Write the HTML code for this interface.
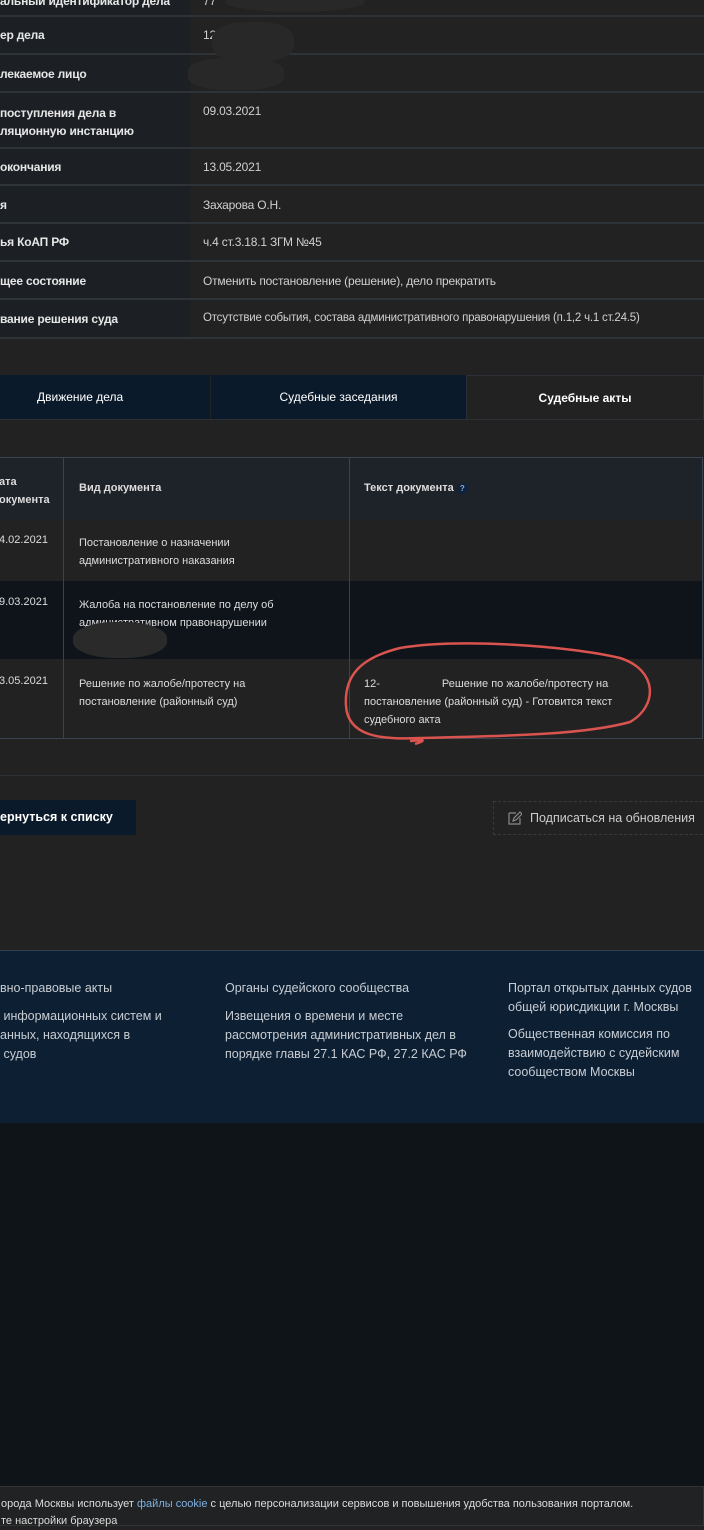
<!DOCTYPE html>
<html><head><meta charset="utf-8"><style>
*{margin:0;padding:0;box-sizing:border-box}
body{width:704px;height:1516px;background:#222;font-family:"Liberation Sans","DejaVu Sans",sans-serif;color:#d8d8d8;position:relative;overflow:hidden}
.row{position:absolute;left:0;width:704px;border-bottom:2px solid #2e3338;font-size:12px}
.row .l{position:absolute;left:0;top:0;bottom:0;width:190px;background:#1c2025;color:#e6e6e6;font-weight:bold;padding-left:0;letter-spacing:-0.2px}
.row .v{position:absolute;left:203px;top:0;color:#d0d0d0;letter-spacing:-0.2px}
.abs{position:absolute}
.blot{position:absolute;background:#282828;border-radius:50%}
</style></head><body>
<div class="row" style="top:-22px;height:39px"><div class="l"><span class="abs" style="top:16px">альный идентификатор дела</span></div><div class="v" style="top:16px">77</div></div>
<div class="row" style="top:17px;height:38px"><div class="l"><span class="abs" style="top:11px">ер дела</span></div><div class="v" style="top:11px">12</div></div>
<div class="row" style="top:55px;height:38px"><div class="l"><span class="abs" style="top:12px">лекаемое лицо</span></div></div>
<div class="row" style="top:93px;height:56px"><div class="l"><span class="abs" style="top:11px;line-height:18px">поступления дела в<br>ляционную инстанцию</span></div><div class="v" style="top:11px">09.03.2021</div></div>
<div class="row" style="top:149px;height:37px"><div class="l"><span class="abs" style="top:11px">окончания</span></div><div class="v" style="top:11px">13.05.2021</div></div>
<div class="row" style="top:186px;height:38px"><div class="l"><span class="abs" style="top:12px">я</span></div><div class="v" style="top:12px">Захарова О.Н.</div></div>
<div class="row" style="top:224px;height:38px"><div class="l"><span class="abs" style="top:11px">ья КоАП РФ</span></div><div class="v" style="top:11px">ч.4 ст.3.18.1 ЗГМ №45</div></div>
<div class="row" style="top:262px;height:38px"><div class="l"><span class="abs" style="top:12px">щее состояние</span></div><div class="v" style="top:12px">Отменить постановление (решение), дело прекратить</div></div>
<div class="row" style="top:300px;height:39px"><div class="l"><span class="abs" style="top:12px">вание решения суда</span></div><div class="v" style="top:12px;font-size:11.5px">Отсутствие события, состава административного правонарушения (п.1,2 ч.1 ст.24.5)</div></div>
<div class="blot" style="left:225px;top:-8px;width:140px;height:20px"></div>
<div class="blot" style="left:212px;top:22px;width:82px;height:40px;border-radius:40%"></div>
<div class="blot" style="left:188px;top:58px;width:96px;height:32px;border-radius:40%"></div>

<div class="abs" style="top:375px;left:0;width:704px;height:45px;border-bottom:1px solid #2c3036"></div>
<div class="abs" style="top:375px;left:0;width:210px;height:44px;background:#0b1a2b;font-size:12px;color:#fff;line-height:44px;padding-left:37px">Движение дела</div>
<div class="abs" style="top:375px;left:211px;width:255px;height:44px;background:#0b1a2b;font-size:12px;color:#fff;text-align:center;line-height:44px">Судебные заседания</div>
<div class="abs" style="top:375px;left:466px;width:238px;height:45px;border:1px solid #2c3036;border-bottom:none;font-size:12px;color:#fff;font-weight:bold;text-align:center;line-height:45px">Судебные акты</div>

<div class="abs" style="top:457px;left:-2px;width:705px;height:282px;border:1px solid #3a4450;font-size:11px;color:#ddd">
<div class="abs" style="top:0;left:0;right:0;height:62px;background:#1e2329"></div>
<div class="abs" style="top:123px;left:0;right:0;height:78px;background:#0f141a"></div>
<div class="abs" style="top:0;bottom:0;left:64px;border-left:1px solid #3a4450"></div>
<div class="abs" style="top:0;bottom:0;left:350px;border-left:1px solid #3a4450"></div>
<div class="abs" style="top:15px;left:0;font-weight:bold;line-height:18px">ата<br>окумента</div>
<div class="abs" style="top:24px;left:80px;font-weight:bold">Вид документа</div>
<div class="abs" style="top:24px;left:365px;font-weight:bold">Текст документа <span style="display:inline-block;width:11px;height:11px;border-radius:50%;background:#0c2240;color:#9ab;font-size:8px;text-align:center;line-height:11px">?</span></div>
<div class="abs" style="top:76px;left:0">4.02.2021</div>
<div class="abs" style="top:76px;left:80px;line-height:18px">Постановление о назначении<br>административного наказания</div>
<div class="abs" style="top:138px;left:0">9.03.2021</div>
<div class="abs" style="top:138px;left:80px;line-height:18px">Жалоба на постановление по делу об<br>административном правонарушении</div>
<div class="abs" style="top:164px;left:74px;width:94px;height:36px;border-radius:45%;background:#2a2a2a"></div>
<div class="abs" style="top:217px;left:0">3.05.2021</div>
<div class="abs" style="top:217px;left:80px;line-height:18px">Решение по жалобе/протесту на<br>постановление (районный суд)</div>
<div class="abs" style="top:217px;left:365px;line-height:18px">12-<span style="display:inline-block;width:62px"></span>Решение по жалобе/протесту на<br>постановление (районный суд) - Готовится текст<br>судебного акта</div>
</div>
<svg class="abs" style="left:340px;top:636px" width="320" height="112"><path d="M60 12 C120 2 230 10 280 22 C318 34 318 70 290 86 C240 100 150 100 80 102 C40 104 8 100 6 70 C4 40 20 22 60 12 M70 105 C80 104 90 103 75 108" fill="none" stroke="#d9534f" stroke-width="2.5"/></svg>

<div class="abs" style="top:775px;left:0;width:704px;border-top:1px solid #2e3338"></div>
<div class="abs" style="top:800px;left:0;width:136px;height:35px;background:#0b1a2b;border-radius:2px;color:#fff;font-weight:bold;font-size:12.5px;line-height:35px">ернуться к списку</div>
<div class="abs" style="top:801px;left:493px;width:215px;height:34px;border:1px dashed #3a3a3a;font-size:12.5px;color:#ccc;line-height:33px;padding-left:36px">Подписаться на обновления</div>
<svg class="abs" style="left:508px;top:811px" width="14" height="14"><path d="M1 2h7M1 2v11h11V7M5 10l1-3 6-6 2 2-6 6z" fill="none" stroke="#888" stroke-width="1.2"/></svg>

<div class="abs" style="top:950px;left:0;width:704px;height:173px;background:#0d1f33;border-top:1px solid #33404d;font-size:12.5px;color:#c8cdd3;line-height:19px">
<div class="abs" style="top:28px;left:0">вно-правовые акты</div>
<div class="abs" style="top:56px;left:0">&nbsp;информационных систем и<br>анных, находящихся в<br>&nbsp;судов</div>
<div class="abs" style="top:28px;left:225px">Органы судейского сообщества</div>
<div class="abs" style="top:56px;left:225px">Извещения о времени и месте<br>рассмотрения административных дел в<br>порядке главы 27.1 КАС РФ, 27.2 КАС РФ</div>
<div class="abs" style="top:28px;left:508px;width:200px">Портал открытых данных судов<br>общей юрисдикции г. Москвы</div>
<div class="abs" style="top:74px;left:508px">Общественная комиссия по<br>взаимодействию с судейским<br>сообществом Москвы</div>
</div>
<div class="abs" style="top:1123px;left:0;width:704px;height:393px;background:#0f1418"></div>
<div class="abs" style="top:1486px;left:-4px;width:708px;height:40px;background:#202224;border:1px solid #333;font-size:11px;color:#ddd;padding:9px 0 0 4px;line-height:17px">орода Москвы использует <span style="color:#7fb0e0">файлы cookie</span> с целью персонализации сервисов и повышения удобства пользования порталом.<br>те настройки браузера</div>
</body></html>
